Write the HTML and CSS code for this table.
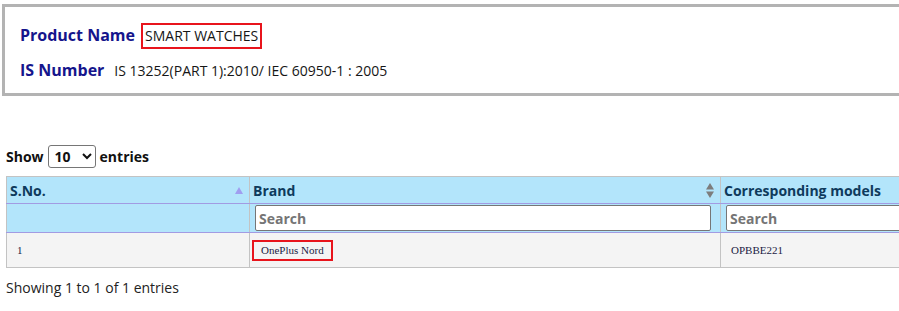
FILE: index.html
```html
<!DOCTYPE html>
<html>
<head>
<meta charset="utf-8">
<link rel="stylesheet" href="styles.css">
</head>
<body>
<div class="page">
  <div class="info">
    <div class="row">
      <span class="label">Product Name</span>
      <span class="value boxed">SMART WATCHES</span>
    </div>
    <div class="row row2">
      <span class="label">IS Number</span>
      <span class="value">IS 13252(PART 1):2010/ IEC 60950-1 : 2005</span>
    </div>
  </div>

  <div class="length">
    <span>Show</span>
    <select class="sel"><option>10</option><option>25</option></select>
    <span>entries</span>
  </div>

  <table class="grid">
    <colgroup>
      <col class="c1"><col class="c2"><col class="c3">
    </colgroup>
    <thead>
      <tr class="head">
        <th><div class="th-in"><span>S.No.</span>
          <svg class="sort" width="8" height="7" viewBox="0 0 8 7"><path d="M4 0 L8 7 L0 7 Z" fill="#a09ef0"/></svg></div></th>
        <th><div class="th-in"><span>Brand</span>
          <svg class="sort" width="8" height="15" viewBox="0 0 8 15"><path d="M4 0 L8 6.5 L0 6.5 Z M0 8.5 L8 8.5 L4 15 Z" fill="#7d7d7d"/></svg></div></th>
        <th><div class="th-in"><span>Corresponding models</span></div></th>
      </tr>
      <tr class="filters">
        <th></th>
        <th><input class="search" type="text" placeholder="Search"></th>
        <th><input class="search" type="text" placeholder="Search"></th>
      </tr>
    </thead>
    <tbody>
      <tr class="data">
        <td>1</td>
        <td><span class="brand">OnePlus Nord</span></td>
        <td>OPBBE221</td>
      </tr>
    </tbody>
  </table>

  <div class="summary">Showing 1 to 1 of 1 entries</div>
</div>
</body>
</html>
```

FILE: styles.css
```css
html, body {
  margin: 0;
  padding: 0;
  overflow: hidden;
  background: #ffffff;
}
.page {
  width: 1200px;
  font-family: "Open Sans", "Liberation Sans", sans-serif;
  color: #222;
}
.info {
  margin: 4px 0 0 2px;
  border: 3px solid #b3b3b3;
  padding: 16px 0 6px 15px;
  width: 1100px;
}
.row {
  display: flex;
  align-items: baseline;
  gap: 6px;
  height: 28px;
}
.row2 {
  margin-top: 8px;
}
.label {
  font-size: 16px;
  font-weight: 700;
  color: #15158c;
}
.row2 .label { margin-right: 4px; }
.value {
  font-size: 14px;
  color: #161616;
}
.boxed {
  border: 2px solid #e8141c;
  padding: 1px 2px 2px 2px;
}
.length {
  margin: 49px 0 0 6px;
  display: flex;
  align-items: center;
  gap: 4px;
  font-size: 14px;
  font-weight: 700;
  color: #111;
}
.sel {
  width: 48px;
  height: 23px;
  font-family: "Open Sans", sans-serif;
  font-size: 14px;
  font-weight: 700;
  border: 1px solid #767676;
  border-radius: 3px;
  background: #fff;
  color: #111;
  padding: 0 2px;
}
.grid {
  margin: 8px 0 0 6px;
  border-collapse: collapse;
  table-layout: fixed;
  width: 1000px;
}
.c1 { width: 243px; }
.c2 { width: 471px; }
.c3 { width: 286px; }
.grid th, .grid td {
  border: 1px solid #c3c3c3;
  text-align: left;
}
.head th {
  background: #b3e5fb;
  height: 26px;
  padding: 0 6px 0 3px;
  font-size: 14px;
  font-weight: 700;
  color: #0e3a5c;
  border-bottom: 1px solid #a29be2;
}
.th-in {
  display: flex;
  align-items: center;
  justify-content: space-between;
}
.filters th {
  background: #b3e5fb;
  height: 28px;
  padding: 0 9px 0 5px;
  border-bottom: 1px solid #a29be2;
}
.search {
  box-sizing: border-box;
  width: 100%;
  height: 26px;
  border: 1px solid #767676;
  border-radius: 2px;
  font-family: "Open Sans", sans-serif;
  font-size: 14px;
  font-weight: 700;
  padding: 0 3px;
  display: block;
}
.search::placeholder { color: #757575; }
.data td {
  background: #f4f4f4;
  height: 34px;
  padding: 0 10px;
  font-family: "Liberation Serif", serif;
  font-size: 11px;
  color: #1c1c44;
}
.data td:nth-child(2) { padding-left: 0; }
.brand {
  display: inline-block;
  margin-left: 2px;
  border: 2px solid #e8141c;
  padding: 2px 7px 3px 7px;
}
.summary {
  margin: 10px 0 0 6px;
  font-size: 14px;
  color: #222;
}
```
